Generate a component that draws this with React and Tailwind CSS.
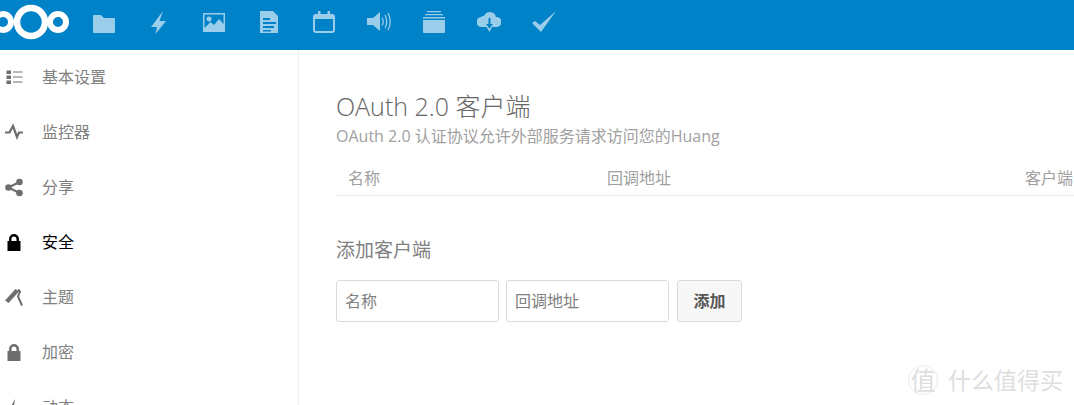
import React from 'react';

const FONT = { fontFamily: '"Open Sans", "Noto Sans CJK SC", sans-serif' };

const appIcons = [
  <path key="files" d="M1 6a1 1 0 0 1 1-1h7l3 3h10a1 1 0 0 1 1 1v13a1 1 0 0 1-1 1H2a1 1 0 0 1-1-1z" />,
  <path key="activity" d="M16 1 4 17h6l-1.500 7L19 11h-6.500z" />,
  <path key="gallery" fillRule="evenodd" d="M1 3h22v19H1zM2.500 4.500v13.500l6-6 3.500 3 5-6 4.500 5V4.500zM7 6.500a2.500 2.500 0 1 1 0 5 2.500 2.500 0 0 1 0-5z" />,
  <path key="notes" fillRule="evenodd" d="M3 1h13l5 5v17H3zM6 8v2h7V8zM6 12v2h13v-2zM6 16v2h11v-2zM6 20v1.500h8V20z" />,
  <path key="calendar" fillRule="evenodd" d="M6 1h2.500v3h7V1H18v3h2a3 3 0 0 1 3 3v13a3 3 0 0 1-3 3H4a3 3 0 0 1-3-3V7a3 3 0 0 1 3-3h2zM3 9v11a1 1 0 0 0 1 1h16a1 1 0 0 0 1-1V9z" />,
  <g key="sound">
    <path d="M0 8h6l7-6v19l-7-6H0z" />
    <path d="M15 7.500q2.500 4 0 8M18 5q3.500 6.500 0 13M21 3q4.500 8.500 0 17" fill="none" stroke="currentColor" strokeWidth="1.300" />
  </g>,
  <path key="deck" d="M5 1h14v1.300H5zM3 4h18v1.300H3zM1 7h22v1.500H1zM1 10h22v12a1 1 0 0 1-1 1H2a1 1 0 0 1-1-1z" />,
  <path key="cloud" fillRule="evenodd" d="M13 2a6.500 6.500 0 0 1 6 5 5 5 0 0 1 1 10h-5l-2.500 5-3-5H5a5 5 0 0 1-1-10 4 4 0 0 1 3-1 6.500 6.500 0 0 1 6-4zM11.500 8v6H9l3.500 4.500L16 14h-2.500V8z" />,
  <path key="tasks" d="M0 13l3-2 5 4L24 1 9 22z" />,
];

const sideItems = [
  {
    label: '基本设置',
    icon: <path d="M1.500 2.500h4.500v3.500H1.500zM1.500 7.500h4.500v3.500H1.500zM1.500 12.500h4.500v3.500H1.500zM8 3.500h9.500v1H8zM8 8.500h9.500v1H8zM8 13.500h9.500v1H8z" />,
  },
  {
    label: '监控器',
    icon: <path d="M0 9.500h4.500L8 3l4 11 2-4.500h4" fill="none" stroke="currentColor" strokeWidth="2.200" />,
  },
  {
    label: '分享',
    icon: (
      <g>
        <circle cx="3.500" cy="9.500" r="3.300" />
        <circle cx="14.500" cy="4" r="3.300" />
        <circle cx="14.500" cy="15" r="3.300" />
        <path d="M3.500 9.500 14.500 4M3.500 9.500 14.500 15" stroke="currentColor" strokeWidth="2" />
      </g>
    ),
  },
  { label: '安全', active: true, lock: true },
  {
    label: '主题',
    icon: (
      <g>
        <path d="M0 12.500 10.500 1 14 3.500 3.500 15z" />
        <path d="m13 1.500 2 2-2 5 4 9" fill="none" stroke="currentColor" strokeWidth="2" />
      </g>
    ),
  },
  { label: '加密', lock: true },
  { label: '动态', icon: <path d="M10 1 4 12h4l-1 7 6-11H9z" /> },
];

function NavIcon({ item }) {
  return (
    <svg
      width="18"
      height="20"
      viewBox="0 0 18 20"
      className={`block shrink-0 ${item.active ? 'text-black' : 'text-[#6e6e6e]'}`}
      fill="currentColor"
    >
      {item.lock ? (
        <path fillRule="evenodd" d="M4 8V6a5 5 0 0 1 10 0v2h1.500v10h-13V8zM6.500 8h5V6a2.500 2.500 0 0 0-5 0z" />
      ) : (
        item.icon
      )}
    </svg>
  );
}

export default function App() {
  return (
    <div className="relative h-[405px] w-[1074px] overflow-hidden bg-white" style={FONT}>
      <header className="flex h-[50px] items-center bg-[#0082c9]">
        <svg width="76" height="50" viewBox="0 0 76 50" className="shrink-0" fill="none" stroke="white">
          <circle cx="3" cy="22" r="8" strokeWidth="6" />
          <circle cx="31" cy="22" r="14" strokeWidth="6.500" />
          <circle cx="58" cy="22" r="8" strokeWidth="6" />
        </svg>
        <nav className="flex pb-[6px] text-[#99cde9]">
          {appIcons.map((icon, i) => (
            <div key={i} className="flex w-[55px] justify-center">
              <svg width="24" height="24" viewBox="0 0 24 24" fill="currentColor">
                {icon}
              </svg>
            </div>
          ))}
        </nav>
      </header>

      <div className="flex">
        <aside className="h-[355px] w-[299px] shrink-0 overflow-hidden border-r border-[#eeeeee]">
          {sideItems.map((item) => (
            <div
              key={item.label}
              className={`flex h-[55px] items-center gap-[19px] pl-[5px] text-[16px] ${item.active ? 'text-black' : 'text-[#808080]'}`}
            >
              <NavIcon item={item} />
              <span className="-translate-y-px">{item.label}</span>
            </div>
          ))}
        </aside>

        <main className="min-w-0 flex-1 pl-[37px] pt-[37px]">
          <h2 className="text-[25px] leading-[38px] font-light text-[#666666]">OAuth 2.0 客户端</h2>
          <p className="pt-[1px] text-[16px] leading-[20px] text-[#a0a0a0]">OAuth 2.0 认证协议允许外部服务请求访问您的Huang</p>

          <div className="mt-[13px] flex h-[37px] w-[760px] items-center border-b border-[#ebebeb] pl-[12px] pt-[1px] text-[16px] text-[#a0a0a0]">
            <span className="w-[259px] shrink-0">名称</span>
            <span className="w-[418px] shrink-0">回调地址</span>
            <span className="shrink-0">客户端 ID</span>
          </div>

          <h3 className="mt-[40px] text-[19px] leading-[28px] font-normal text-[#808080]">添加客户端</h3>

          <form className="mt-[16px] flex">
            <input
              placeholder="名称"
              className="h-[42px] w-[163px] rounded-[3px] border border-[#dbdbdb] bg-white px-[8px] text-[16px] placeholder:text-[#808080]"
            />
            <input
              placeholder="回调地址"
              className="ml-[7px] h-[42px] w-[163px] rounded-[3px] border border-[#dbdbdb] bg-white px-[8px] text-[16px] placeholder:text-[#808080]"
            />
            <button
              type="button"
              className="ml-[8px] h-[42px] w-[65px] rounded-[3px] border border-[#dbdbdb] bg-[#f7f7f7] text-[16px] font-bold text-[#555555]"
            >
              添加
            </button>
          </form>
        </main>
      </div>

      <div className="absolute bottom-[10px] left-[908px] flex items-center gap-[10px] text-[#dedede]">
        <span className="flex h-[30px] w-[30px] items-center justify-center rounded-full border border-[#ececec] text-[25px] leading-none">值</span>
        <span className="text-[23px] leading-none whitespace-nowrap">什么值得买</span>
      </div>
    </div>
  );
}
